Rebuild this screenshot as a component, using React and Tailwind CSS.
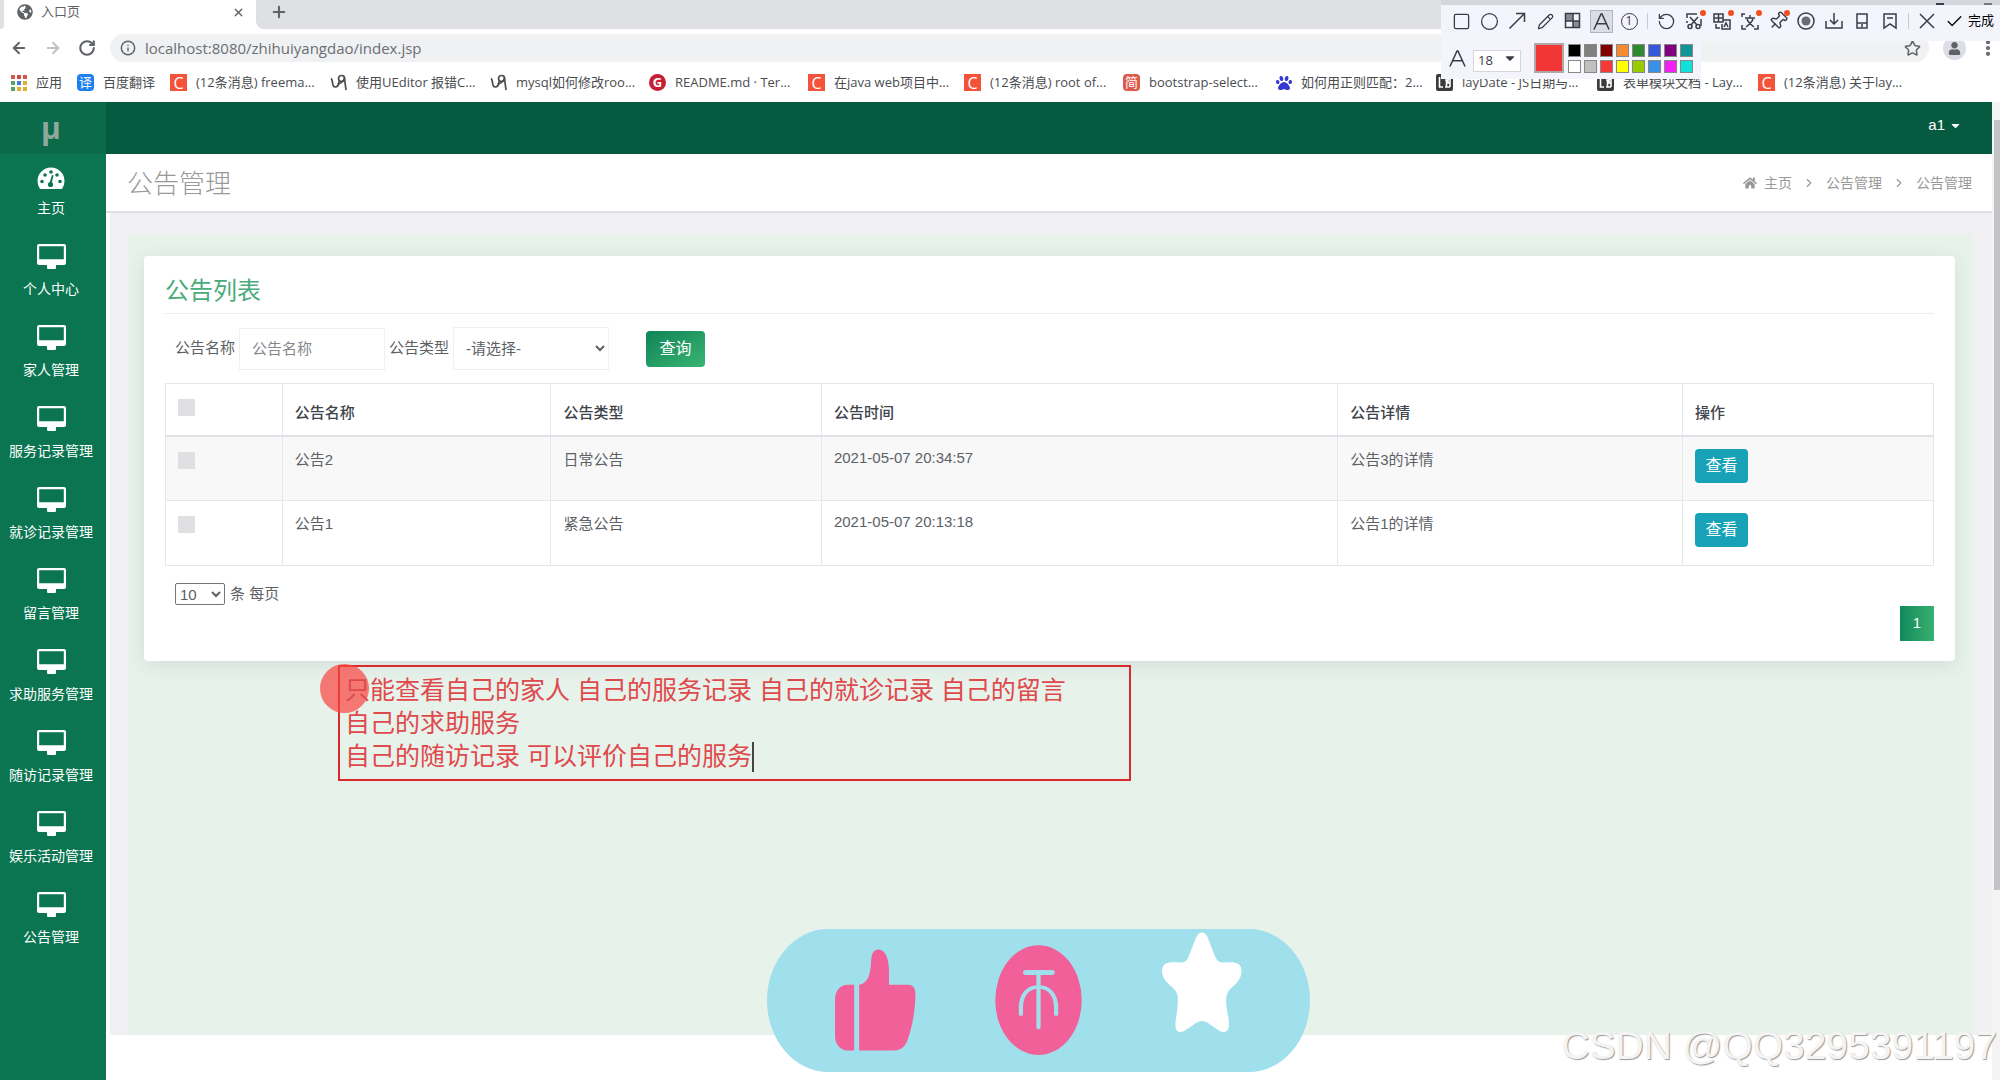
import React from "react";
import { FaHome, FaCaretDown, FaGlobeAmericas, FaPaw, FaUser } from "react-icons/fa";
import {
  ArrowLeft, ArrowRight, RotateCw, Info, X, Plus, Star, EllipsisVertical, Square, Circle,
  Pencil, RotateCcw, Pin, Check, ChevronRight,
} from "lucide-react";

const cjk = "font-['Liberation_Sans','Noto_Sans_CJK_SC',sans-serif]";
const chromeFont = "font-['Open_Sans','Noto_Sans_CJK_SC',sans-serif]";

function LetterIcon({ children, className }) {
  return <span className={`flex h-[17px] w-[17px] shrink-0 items-center justify-center leading-none text-white ${className}`}>{children}</span>;
}

const CIcon = () => <LetterIcon className="bg-[#f4533a] text-base">C</LetterIcon>;

function LayIcon() {
  return (
    <svg className="h-[17px] w-[17px] shrink-0" viewBox="0 0 17 17">
      <rect width="17" height="17" rx="2" fill="#3b3b3e" />
      <path d="M3.500 3v10H7M9 6h1.500v7M9 13h5M14 13V5h-2v4h2" fill="none" stroke="#fff" strokeWidth="1.600" />
    </svg>
  );
}

function SwirlIcon() {
  return (
    <svg className="h-[17px] w-[17px] shrink-0" viewBox="0 0 17 17" fill="none" stroke="#4a4a4a" strokeWidth="1.700" strokeLinecap="round">
      <path d="M1.500 5c1.500 2 .5 8 3.500 8s4-3 4-5.500" />
      <circle cx="11.500" cy="4.500" r="3" />
      <path d="M8 10c3-.5 5-2 6.500-5.500.5 4 1 8 1.500 11" />
    </svg>
  );
}

function AppsIcon() {
  const colors = ["#d9534f", "#c94b4b", "#d9534f", "#5aa55a", "#3f7de0", "#e0b030", "#5aa55a", "#e0b030", "#e0b030"];
  return (
    <span className="grid w-[16px] shrink-0 grid-cols-3 gap-[2px]">
      {colors.map((c, i) => <span key={i} className="h-[4px] w-[4px]" style={{ backgroundColor: c }} />)}
    </span>
  );
}

const bookmarks = [
  { w: "w-[66px]", icon: <AppsIcon />, label: "应用" },
  { w: "w-[93px]", icon: <LetterIcon className="rounded-sm bg-[#1f7ef0] text-[13px]">译</LetterIcon>, label: "百度翻译" },
  { w: "w-[160px]", icon: <CIcon />, label: "(12条消息) freema..." },
  { w: "w-[160px]", icon: <SwirlIcon />, label: "使用UEditor 报错C..." },
  { w: "w-[159px]", icon: <SwirlIcon />, label: "mysql如何修改roo..." },
  { w: "w-[159px]", icon: <LetterIcon className="rounded-full bg-[#c71d34] text-[13px] font-bold">G</LetterIcon>, label: "README.md · Ter..." },
  { w: "w-[156px]", icon: <CIcon />, label: "在java web项目中..." },
  { w: "w-[159px]", icon: <CIcon />, label: "(12条消息) root of..." },
  { w: "w-[153px]", icon: <LetterIcon className="rounded-sm bg-[#dd5a4c] text-[13px]">简</LetterIcon>, label: "bootstrap-select..." },
  { w: "w-[160px]", icon: <FaPaw className="h-[16px] w-[16px] shrink-0 text-[#3338d0]" />, label: "如何用正则匹配：2..." },
  { w: "w-[161px]", icon: <LayIcon />, label: "layDate - JS日期与..." },
  { w: "w-[161px]", icon: <LayIcon />, label: "表单模块文档 - Lay..." },
  { w: "w-[160px]", icon: <CIcon />, label: "(12条消息) 关于lay..." },
];

function BrowserChrome() {
  return (
    <header className={`${chromeFont} bg-white text-[#5f6368]`}>
      <div className="flex h-[29px]">
        <div className="w-1 rounded-br-lg bg-[#dfe0e4]" />
        <div className="flex h-[29px] w-[252px] items-center bg-white pb-[5px] pl-[13px] pr-[7px]">
          <FaGlobeAmericas className="h-4 w-4" />
          <span className="ml-[8px] flex-1 text-[13px]">入口页</span>
          <button aria-label="关闭标签页" className="p-1"><X size={13} strokeWidth={2.5} /></button>
        </div>
        <div className="flex flex-1 rounded-bl-lg bg-[#dfe0e4]">
          <button aria-label="新建标签页" className="flex w-[46px] items-center justify-center pb-[5px]"><Plus size={18} strokeWidth={2.8} /></button>
        </div>
      </div>
      <div className="flex h-[38px] items-center pr-[2px]">
        <div className="flex w-[110px] items-center gap-[16px] pl-[10px]">
          <button aria-label="后退"><ArrowLeft size={18} strokeWidth={2.5} /></button>
          <button aria-label="前进" className="text-[#bfc1c4]"><ArrowRight size={18} strokeWidth={2.5} /></button>
          <button aria-label="刷新"><RotateCw size={18} strokeWidth={2.8} /></button>
        </div>
        <div className="flex h-[28px] flex-1 items-center rounded-full bg-[#f0f1f3] pl-[10px] pr-[8px]">
          <Info size={16} strokeWidth={2.2} />
          <input aria-label="地址" className="ml-[9px] flex-1 bg-transparent text-[15px] text-[#6b6e72] outline-none" defaultValue="localhost:8080/zhihuiyangdao/index.jsp" />
          <button aria-label="收藏"><Star size={17} strokeWidth={2.2} /></button>
        </div>
        <button aria-label="用户" className="ml-[14px] flex h-[23px] w-[23px] items-center justify-center rounded-full bg-[#dcdde6]"><FaUser size={13} /></button>
        <button aria-label="菜单" className="ml-[12px]"><EllipsisVertical size={20} strokeWidth={3} /></button>
      </div>
      <nav className="flex h-[35px] items-center overflow-hidden pb-1 pl-[11px] text-[13px] text-[#4a4c50]">
        {bookmarks.map((b) => (
          <a key={b.label} href="#" className={`flex shrink-0 items-center gap-[9px] whitespace-nowrap ${b.w}`}>{b.icon}{b.label}</a>
        ))}
      </nav>
    </header>
  );
}

function Line({ d, children }) {
  return (
    <svg width="18" height="18" viewBox="0 0 18 18" fill="none" stroke="#3b3b46" strokeWidth="1.500">
      {d && <path d={d} />}
      {children}
    </svg>
  );
}

function TextA({ size }) {
  return (
    <svg width={size} height={size} viewBox="0 0 18 18" fill="none" stroke="#3b3b46" strokeWidth="1.600">
      <path d="M1 17.500 8.500 1h1L17 17.500M4 11.500h10" />
    </svg>
  );
}

const thin = { size: 19, strokeWidth: 1.6 };
const tools = [
  { label: "矩形", icon: <Square {...thin} /> },
  { label: "椭圆", icon: <Circle {...thin} /> },
  { label: "箭头", icon: <Line d="M1.500 16.500 16 2M8 1.500h8.500V10" /> },
  { label: "画笔", icon: <Pencil size={17} strokeWidth={1.7} /> },
  { label: "马赛克", icon: <Line><path d="M2 2h7v7H2zM9 9h7v7H9z" fill="#8b8b96" stroke="none" /><path d="M1.500 1.500h14v14h-14zM9 2v14M2 9h14" /></Line> },
  { label: "文字", icon: <TextA size={17} />, active: true },
  { label: "序号", icon: <span className="flex h-[17px] w-[17px] items-center justify-center rounded-full border border-[#3b3b46] text-xs leading-none">1</span> },
  { sep: true },
  { label: "撤销", icon: <RotateCcw {...thin} /> },
  { label: "剪切", icon: <Line d="M2 6V2h10M16 7v7M2 9v2M5 5l7 8M13 5l-7 8"><circle cx="5" cy="14.500" r="2" /><circle cx="13" cy="14.500" r="2" /></Line>, dot: true },
  { label: "翻译", icon: <Line d="M1 2h9v8H1zM1 6h9M5.500 2v8M10 8h7v9H9v-5M11 15l2-4 2 4M3 12v4h4" />, dot: true },
  { label: "识别", icon: <Line d="M1 5V2h3M1 13v4h4M17 13v4h-4M4 6h10M9 3v3M6 7c1 3 3 5 7 8M12 7c-1 3-3 5-7 8" />, dot: true },
  { label: "钉住", icon: <Pin size={20} strokeWidth={1.7} className="rotate-45" />, dot: true },
  { label: "录制", icon: <Line><circle cx="9" cy="9" r="8" /><circle cx="9" cy="9" r="4.500" fill="#6a6a75" stroke="none" /></Line> },
  { label: "保存", icon: <Line d="M9 1v11M5 8l4 4 4-4M1 9v7h16V9" /> },
  { label: "手机", icon: <Line d="M4 2h10v14H4zM4 11h10M9 12v3" /> },
  { label: "书签", icon: <Line d="M3 2h12v14l-6-4-6 4zM6 6h6" /> },
  { sep: true },
  { label: "取消", icon: <Line d="m2 2 14 14M16 2 2 16" /> },
];

const swatches = [
  "#000000", "#808080", "#800000", "#f58a32", "#2f8a2f", "#3558d8", "#800080", "#109494",
  "#ffffff", "#c0c0c0", "#f53838", "#ffff00", "#99cc00", "#3a90e5", "#f020f0", "#12e0da",
];

function CaptureToolbar() {
  return (
    <div className={`${chromeFont} absolute right-0 top-0 w-[559px] text-[#3b3b46]`}>
      <div className="flex h-[5px] items-end justify-end gap-[40px] bg-[#d6d7de] pr-2">
        <span className="h-[2px] w-[8px] bg-[#3b3b46]" />
        <span className="h-[2px] w-[8px] bg-[#77777f]" />
      </div>
      <div className="flex h-[36px] items-center bg-[#f4f4fd] pb-1 pl-[6px]">
        {tools.map((t, i) => t.sep ? (
          <span key={i} className="mx-[4px] h-4 w-px bg-[#c9c9d3]" />
        ) : (
          <button key={t.label} aria-label={t.label} className="relative flex w-[28px] items-center justify-center">
            <span className={t.active ? "flex h-[23px] w-[23px] items-center justify-center border border-[#b4b4c0] bg-[#dcdce8]" : "flex h-[23px] items-center"}>{t.icon}</span>
            {t.dot && <span className="absolute right-[2px] top-0 h-[6px] w-[6px] rounded-full bg-[#f05020]" />}
          </button>
        ))}
        <button className="ml-[4px] flex items-center gap-[4px] whitespace-nowrap text-[13px] text-black"><Check size={19} strokeWidth={1.6} />完成</button>
      </div>
      <div className="flex h-[38px] w-[260px] items-center bg-[#f4f4fd] pb-[4px] pl-[8px]">
        <TextA size={17} />
        <div className="relative ml-[7px] h-[22px] w-[48px]">
          <select aria-label="字号" className="h-full w-full appearance-none border border-[#d5d5dc] bg-white pl-1 text-[13px]"><option>18</option></select>
          <FaCaretDown className="pointer-events-none absolute right-1 top-1" size={14} />
        </div>
        <button aria-label="当前颜色" className="ml-[13px] h-[30px] w-[30px] border-2 border-[#b0a8a8] bg-[#f23636]" />
        <div className="ml-[4px] grid grid-cols-8 gap-[3px]">
          {swatches.map((c) => <button key={c} aria-label={c} className="h-[13px] w-[13px] border border-[#888]" style={{ backgroundColor: c }} />)}
        </div>
      </div>
    </div>
  );
}

function GaugeIcon() {
  return (
    <svg width="28" height="23" viewBox="0 0 28 23">
      <path d="M3 22A13.500 13.500 0 0 1 .5 14a13.500 13.500 0 0 1 27 0A13.500 13.500 0 0 1 25 22z" fill="#fff" />
      <g fill="#0a7550">
        <circle cx="5" cy="14.500" r="1.800" /><circle cx="8" cy="8" r="1.800" /><circle cx="14" cy="5" r="1.800" /><circle cx="20" cy="8" r="1.800" /><circle cx="23" cy="14.500" r="1.800" />
        <circle cx="13.500" cy="17.500" r="2.600" /><path d="m12.500 16 2.500-8 1.500.4L14.500 17z" />
      </g>
    </svg>
  );
}

function DesktopIcon() {
  return (
    <svg width="29" height="25" viewBox="0 0 29 25" fill="#fff">
      <path fillRule="evenodd" d="M2 0h25a2 2 0 0 1 2 2v17a2 2 0 0 1-2 2h-8v2.500q0 1.500-1 1.500h-7q-1 0-1-1.500V21H2a2 2 0 0 1-2-2V2a2 2 0 0 1 2-2zM2.200 2.200v13h24.600v-13z" />
    </svg>
  );
}

const menu = ["个人中心", "家人管理", "服务记录管理", "就诊记录管理", "留言管理", "求助服务管理", "随访记录管理", "娱乐活动管理", "公告管理"];

function Sidebar() {
  return (
    <aside className="w-[106px] shrink-0 bg-[#0a7550] text-center text-sm text-white">
      <div className="flex h-[52px] items-center justify-center bg-[#0a6a49] pr-1 font-['Open_Sans',sans-serif] text-[30px] font-bold leading-none text-[#8fa89c]">µ</div>
      <nav className="pr-1">
        <a href="#" className="flex h-[79px] flex-col items-center gap-[8px] whitespace-nowrap pt-[13px] leading-5"><GaugeIcon />主页</a>
        {menu.map((m) => (
          <a key={m} href="#" className="flex h-[81px] flex-col items-center gap-[10px] whitespace-nowrap pt-[11px] leading-5"><DesktopIcon />{m}</a>
        ))}
      </nav>
    </aside>
  );
}

const rows = [
  ["公告2", "日常公告", "2021-05-07 20:34:57", "公告3的详情"],
  ["公告1", "紧急公告", "2021-05-07 20:13:18", "公告1的详情"],
];

const box = "block h-[17px] w-[17px] appearance-none bg-[#e0e0e3]";
const cell = "border border-[#e6e7ea] px-3";

function NoticeCard() {
  return (
    <section className="rounded-sm bg-white px-[21px] pb-[20px] pt-[17px] shadow-[0_4px_20px_rgba(0,60,60,0.1)]">
      <h2 className="border-b border-[#ececee] pb-[4px] text-2xl leading-9 text-[#4aab7b]">公告列表</h2>
      <form className="flex h-[69px] items-center pl-[10px] text-[15px]" onSubmit={(e) => e.preventDefault()}>
        <label htmlFor="name">公告名称</label>
        <input id="name" placeholder="公告名称" className="ml-[4px] h-[42px] w-[146px] border border-[#f0f0f3] px-3 placeholder:text-[#85888c]" />
        <label htmlFor="type" className="ml-[4px]">公告类型</label>
        <select id="type" className="ml-[4px] h-[43px] w-[156px] border border-[#f0f0f3] bg-white pl-2"><option>-请选择-</option></select>
        <button className="ml-[37px] h-[36px] w-[59px] rounded-sm bg-linear-to-br from-[#0b8457] to-[#38b572] text-base text-white">查询</button>
      </form>
      <table className="w-full table-fixed border-collapse text-left text-[15px]">
        <colgroup>
          <col className="w-[6.6%]" /><col className="w-[15.2%]" /><col className="w-[15.3%]" /><col className="w-[29.2%]" /><col className="w-[19.5%]" /><col className="w-[14.2%]" />
        </colgroup>
        <thead>
          <tr className="h-[52px] border-b-2 border-[#dee2e6] text-[#3d444b]">
            <th className={`${cell} pb-1`}><input type="checkbox" aria-label="全选" className={box} /></th>
            {["公告名称", "公告类型", "公告时间", "公告详情", "操作"].map((h) => <th key={h} className={`${cell} pt-2 font-medium`}>{h}</th>)}
          </tr>
        </thead>
        <tbody>
          {rows.map((r, i) => (
            <tr key={r[0]} className={i === 0 ? "h-[65px] bg-[#f8f8f9] align-top" : "h-[65px] align-top"}>
              <td className={`${cell} pt-[15px]`}><input type="checkbox" aria-label={r[0]} className={box} /></td>
              {r.map((c, j) => <td key={c} className={j === 2 ? `${cell} pt-[10px] leading-[22px]` : `${cell} pt-[12px] leading-[22px]`}>{c}</td>)}
              <td className={`${cell} pt-[12px]`}><button className="h-[34px] w-[53px] rounded-sm bg-[#17a2b8] text-base text-white">查看</button></td>
            </tr>
          ))}
        </tbody>
      </table>
      <div className="flex items-center gap-[5px] pl-[10px] pt-[17px] text-[15px]">
        <select id="size" className="h-[22px] w-[50px] rounded-xs border border-[#767676] bg-white text-[15px]"><option>10</option></select>
        <label htmlFor="size">条 每页</label>
      </div>
      <div className="flex justify-end">
        <button className="h-[35px] w-[34px] bg-linear-to-r from-[#0f8a5c] to-[#38b070] text-[15px] text-white">1</button>
      </div>
    </section>
  );
}

function Annotation() {
  return (
    <div className="absolute left-[338px] top-[665px] w-[793px] border-2 border-[#d92b2b] px-[5px] pb-[6px] pt-[7px] text-[25px] leading-[33px] text-[#e0494b]">
      <span className="absolute left-[-20px] top-[-3px] h-[49px] w-[49px] rounded-full bg-[#f9433f]/70" />
      <p className="relative">只能查看自己的家人 自己的服务记录 自己的就诊记录 自己的留言</p>
      <p>自己的求助服务</p>
      <p className="flex items-center">自己的随访记录 可以评价自己的服务<span className="h-[30px] w-[2px] bg-[#444]" /></p>
    </div>
  );
}

function ActionPill() {
  return (
    <svg className="absolute left-[767px] top-[929px] h-[143px] w-[543px]" viewBox="70 86 1420 430" preserveAspectRatio="none">
      <rect x="70" y="86" width="1420" height="430" rx="160" ry="215" fill="#a0dfec" />
      <g fill="#f2609a">
        <path d="M298 254v197h-18c-18 0-32-20-32-42V298c0-26 14-44 34-44zM311 254c22-6 29-28 31-66 1-26 6-40 20-40 17 0 27 28 27 62v44h50c12 0 19 10 19 26 0 50-8 100-20 138-7 24-19 33-38 33H311z" />
        <ellipse cx="780" cy="300" rx="113" ry="165" />
      </g>
      <g fill="none" stroke="#a0dfec" strokeLinecap="round">
        <path d="M747 217h68" strokeWidth="15" />
        <path d="M780 220v162M734 342v-20c0-40 20-62 46-62s46 22 46 62v20" strokeWidth="11" />
      </g>
      <path fill="#fff" d="M1192 112c7-21 24-21 31 0l17 52c6 18 14 24 27 23 24-3 44-2 44 26 0 20-12 36-26 50-14 15-15 27-14 46 1 26 8 45 7 68-1 20-15 24-29 12l-23-18c-13-11-24-11-37 0l-23 18c-14 12-28 8-28-12 0-24 6-42 6-68 1-19 1-31-13-46-15-15-28-30-28-50 0-28 20-29 44-26 14 1 22-5 27-23z" />
    </svg>
  );
}

export default function App() {
  return (
    <div className={`${cjk} relative flex min-h-screen flex-col overflow-hidden bg-white text-[#5c6166]`}>
      <BrowserChrome />
      <div className="flex flex-1">
        <Sidebar />
        <div className="min-w-0 flex-1">
          <div className="flex h-[52px] items-center justify-end bg-[#065a3f] pb-[5px] pr-[30px] text-[15px] text-white">
            <button className="flex items-center gap-1">a1 <FaCaretDown size={13} /></button>
          </div>
          <div className="flex h-[59px] items-center justify-between border-b-2 border-[#dfe0e4] pl-[21px] pr-[20px] text-[#999]">
            <h1 className="pt-[3px] text-[26px] font-light">公告管理</h1>
            <nav className="flex items-center text-sm">
              <FaHome className="mr-[7px]" /><a href="#">主页</a>
              <ChevronRight size={14} className="mx-[10px]" /><a href="#">公告管理</a>
              <ChevronRight size={14} className="mx-[10px]" /><span>公告管理</span>
            </nav>
          </div>
          <main className="ml-1 bg-[#f0f0f3] pl-[18px] pr-[20px] pt-[22px]">
            <div className="min-h-[800px] bg-[#e7f2eb] pl-[16px] pr-[17px] pt-[21px]">
              <NoticeCard />
            </div>
          </main>
        </div>
        <div className="flex w-[8px] flex-col items-end bg-[#f4f4f5] pt-[18px]">
          <div className="h-[770px] w-[6px] bg-[#c2c3c5]" />
        </div>
      </div>
      <CaptureToolbar />
      <Annotation />
      <ActionPill />
      <div className="absolute bottom-[12px] right-[3px] whitespace-nowrap text-[39px] leading-[44px] text-[#f4f4f4] [text-shadow:1px_1px_1px_#999]">CSDN @QQ3295391197</div>
    </div>
  );
}
